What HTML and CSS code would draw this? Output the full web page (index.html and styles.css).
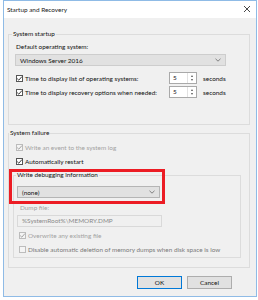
FILE: index.html
```html
<!DOCTYPE html>
<html lang="en">
<head>
    <meta charset="UTF-8">
    <meta name="viewport" content="width=device-width, initial-scale=1.0">
    <title>Startup and Recovery</title>
    <link rel="stylesheet" href="styles.css">
</head>
<body>

<div class="dialog">
    <div class="titlebar">
        <span class="title">Startup and Recovery</span>
        <svg class="close" width="8" height="8" viewBox="0 0 8 8"><path d="M1 1L7 7M7 1L1 7" stroke="#333" stroke-width="0.9"/></svg>
    </div>
    <div class="body">
        <fieldset class="group startup">
            <legend>System startup</legend>
            <div class="label">Default operating system:</div>
            <div class="combo os">
                <span>Windows Server 2016</span>
                <svg width="6" height="4" viewBox="0 0 6 4"><path d="M0.5 0.8L3 3.2L5.5 0.8" fill="none" stroke="#666" stroke-width="0.8"/></svg>
            </div>
            <div class="timer-row first">
                <span class="check on"><svg viewBox="0 0 7 7"><path d="M1.2 3.6L2.8 5.2L5.9 1.6" fill="none" stroke="#222" stroke-width="0.9"/></svg></span>
                <span class="text">Time to display list of operating systems:</span>
                <span class="spin"><span class="spin-val">5</span><span class="spin-btns"><i class="up"></i><i class="down"></i></span></span>
                <span class="text">seconds</span>
            </div>
            <div class="timer-row">
                <span class="check on"><svg viewBox="0 0 7 7"><path d="M1.2 3.6L2.8 5.2L5.9 1.6" fill="none" stroke="#222" stroke-width="0.9"/></svg></span>
                <span class="text">Time to display recovery options when needed:</span>
                <span class="spin"><span class="spin-val">5</span><span class="spin-btns"><i class="up"></i><i class="down"></i></span></span>
                <span class="text">seconds</span>
            </div>
        </fieldset>

        <fieldset class="group failure">
            <legend>System failure</legend>
            <div class="check-row event disabled">
                <span class="check on"><svg viewBox="0 0 7 7"><path d="M1.2 3.6L2.8 5.2L5.9 1.6" fill="none" stroke="#9a9a9a" stroke-width="0.9"/></svg></span>
                <span>Write an event to the system log</span>
            </div>
            <div class="check-row restart">
                <span class="check on"><svg viewBox="0 0 7 7"><path d="M1.2 3.6L2.8 5.2L5.9 1.6" fill="none" stroke="#222" stroke-width="0.9"/></svg></span>
                <span>Automatically restart</span>
            </div>

            <fieldset class="group debug">
                <legend>Write debugging information</legend>
                <div class="combo dump-type">
                    <span>(none)</span>
                    <svg width="6" height="4" viewBox="0 0 6 4"><path d="M0.5 0.8L3 3.2L5.5 0.8" fill="none" stroke="#666" stroke-width="0.8"/></svg>
                </div>
                <div class="label muted dump-label">Dump file:</div>
                <div class="field">%SystemRoot%\MEMORY.DMP</div>
                <div class="check-row overwrite disabled">
                    <span class="check on"><svg viewBox="0 0 7 7"><path d="M1.2 3.6L2.8 5.2L5.9 1.6" fill="none" stroke="#9a9a9a" stroke-width="0.9"/></svg></span>
                    <span>Overwrite any existing file</span>
                </div>
                <div class="check-row low-disk disabled">
                    <span class="check"></span>
                    <span>Disable automatic deletion of memory dumps when disk space is low</span>
                </div>
            </fieldset>
        </fieldset>

        <div class="buttons">
            <button class="btn default">OK</button>
            <button class="btn">Cancel</button>
        </div>
    </div>
    <div class="callout"></div>
</div>

</body>
</html>
```

FILE: styles.css
```css
body {
    margin: 0;
    background: #fff;
    font-family: 'Lato', 'Open Sans', sans-serif;
    font-size: 6.4px;
    color: #111;
    white-space: nowrap;
}
.dialog {
    position: relative;
    margin-left: 3px;
    width: 254px;
    height: 297px;
    box-sizing: border-box;
    border: 1px solid #8fbbe6;
    display: flex;
    flex-direction: column;
}
.titlebar {
    height: 17px;
    flex: none;
    background: #fff;
    display: flex;
    align-items: center;
    justify-content: space-between;
    padding: 0 5px 0 3px;
}
.title {
    color: #222;
}
.close {
    margin-top: -1px;
}
.body {
    flex: 1;
    background: #f0f0f0;
    padding: 0 6px 0 4px;
}

/* group boxes */
.group {
    margin: 0;
    border: 1px solid #dcdcdc;
    min-width: 0;
}
.group legend {
    line-height: 10px;
    padding: 0 1px;
    margin-left: -4px;
    color: #111;
}
.startup {
    margin-top: 11px;
    padding: 3px 8px 26px 7px;
}
.failure {
    margin-top: 3px;
    padding: 4px 8px 9px 4px;
}
.debug {
    margin-top: 4px;
    padding: 6px 6px 3px 3px;
}
.debug legend {
    margin-left: -1px;
}

.label {
    line-height: 10px;
}
.muted,
.disabled {
    color: #a2a2a2;
}

/* combo boxes */
.combo {
    height: 12px;
    box-sizing: border-box;
    background: #e1e1e1;
    border: 1px solid #cdcdcd;
    display: flex;
    align-items: center;
    justify-content: space-between;
    padding: 0 4px 0 4px;
}
.combo.os {
    margin: 2px 0 0 -1px;
    width: 211px;
}
.combo.dump-type {
    width: 143px;
    border-color: #b5b5b5;
}

/* checkboxes */
.check {
    width: 7px;
    height: 7px;
    box-sizing: border-box;
    border: 1px solid #555;
    background: #fff;
    display: inline-flex;
    flex: none;
}
.check svg {
    width: 7px;
    height: 7px;
    margin: -1px;
}
.disabled .check {
    border-color: #bcbcbc;
    background: #f4f4f4;
}
.check-row {
    display: flex;
    align-items: center;
    gap: 2px;
    height: 10px;
    margin-left: 3px;
}
.restart {
    margin-top: 4px;
}

.timer-row {
    display: grid;
    grid-template-columns: 7px 142px 28px auto;
    column-gap: 2px;
    align-items: center;
    height: 12px;
    margin-top: 2px;
}
.timer-row.first {
    margin-top: 6px;
}
.timer-row .text:last-child {
    margin-left: 4px;
}
.spin {
    display: flex;
    height: 12px;
    box-sizing: border-box;
    border: 1px solid #a9a9a9;
    background: #fff;
}
.spin-val {
    flex: 1;
    padding-left: 3px;
    line-height: 10px;
}
.spin-btns {
    width: 8px;
    display: flex;
    flex-direction: column;
    align-items: center;
    justify-content: center;
    gap: 2px;
    border-left: 1px solid #e2e2e2;
}
.spin-btns i {
    width: 0;
    height: 0;
    border-left: 1.5px solid transparent;
    border-right: 1.5px solid transparent;
}
.spin-btns .up {
    border-bottom: 2px solid #555;
}
.spin-btns .down {
    border-top: 2px solid #555;
}

/* dump file */
.dump-label {
    margin-top: 5px;
    margin-left: 3px;
}
.field {
    margin-top: 2px;
    width: 145px;
    height: 12px;
    box-sizing: border-box;
    border: 1px solid #d9d9d9;
    line-height: 10px;
    padding-left: 4px;
    color: #8a8a8a;
}
.overwrite {
    margin: 3px 0 0 2px;
}
.low-disk {
    margin: 4px 0 0 2px;
}
.low-disk span:last-child {
    color: #7a7a7a;
}

/* buttons */
.buttons {
    display: flex;
    justify-content: flex-end;
    gap: 5px;
    margin-top: 8px;
    padding-right: 18px;
}
.btn {
    width: 45px;
    height: 13px;
    padding: 0;
    font-family: inherit;
    font-size: 6.4px;
    color: #111;
    background: #e1e1e1;
    border: 1px solid #adadad;
}
.btn.default {
    border-color: #0078d7;
}

/* red annotation frame */
.callout {
    position: absolute;
    left: 5px;
    top: 168px;
    width: 156px;
    height: 35px;
    box-sizing: border-box;
    border: 3px solid #ec1c24;
}
```
